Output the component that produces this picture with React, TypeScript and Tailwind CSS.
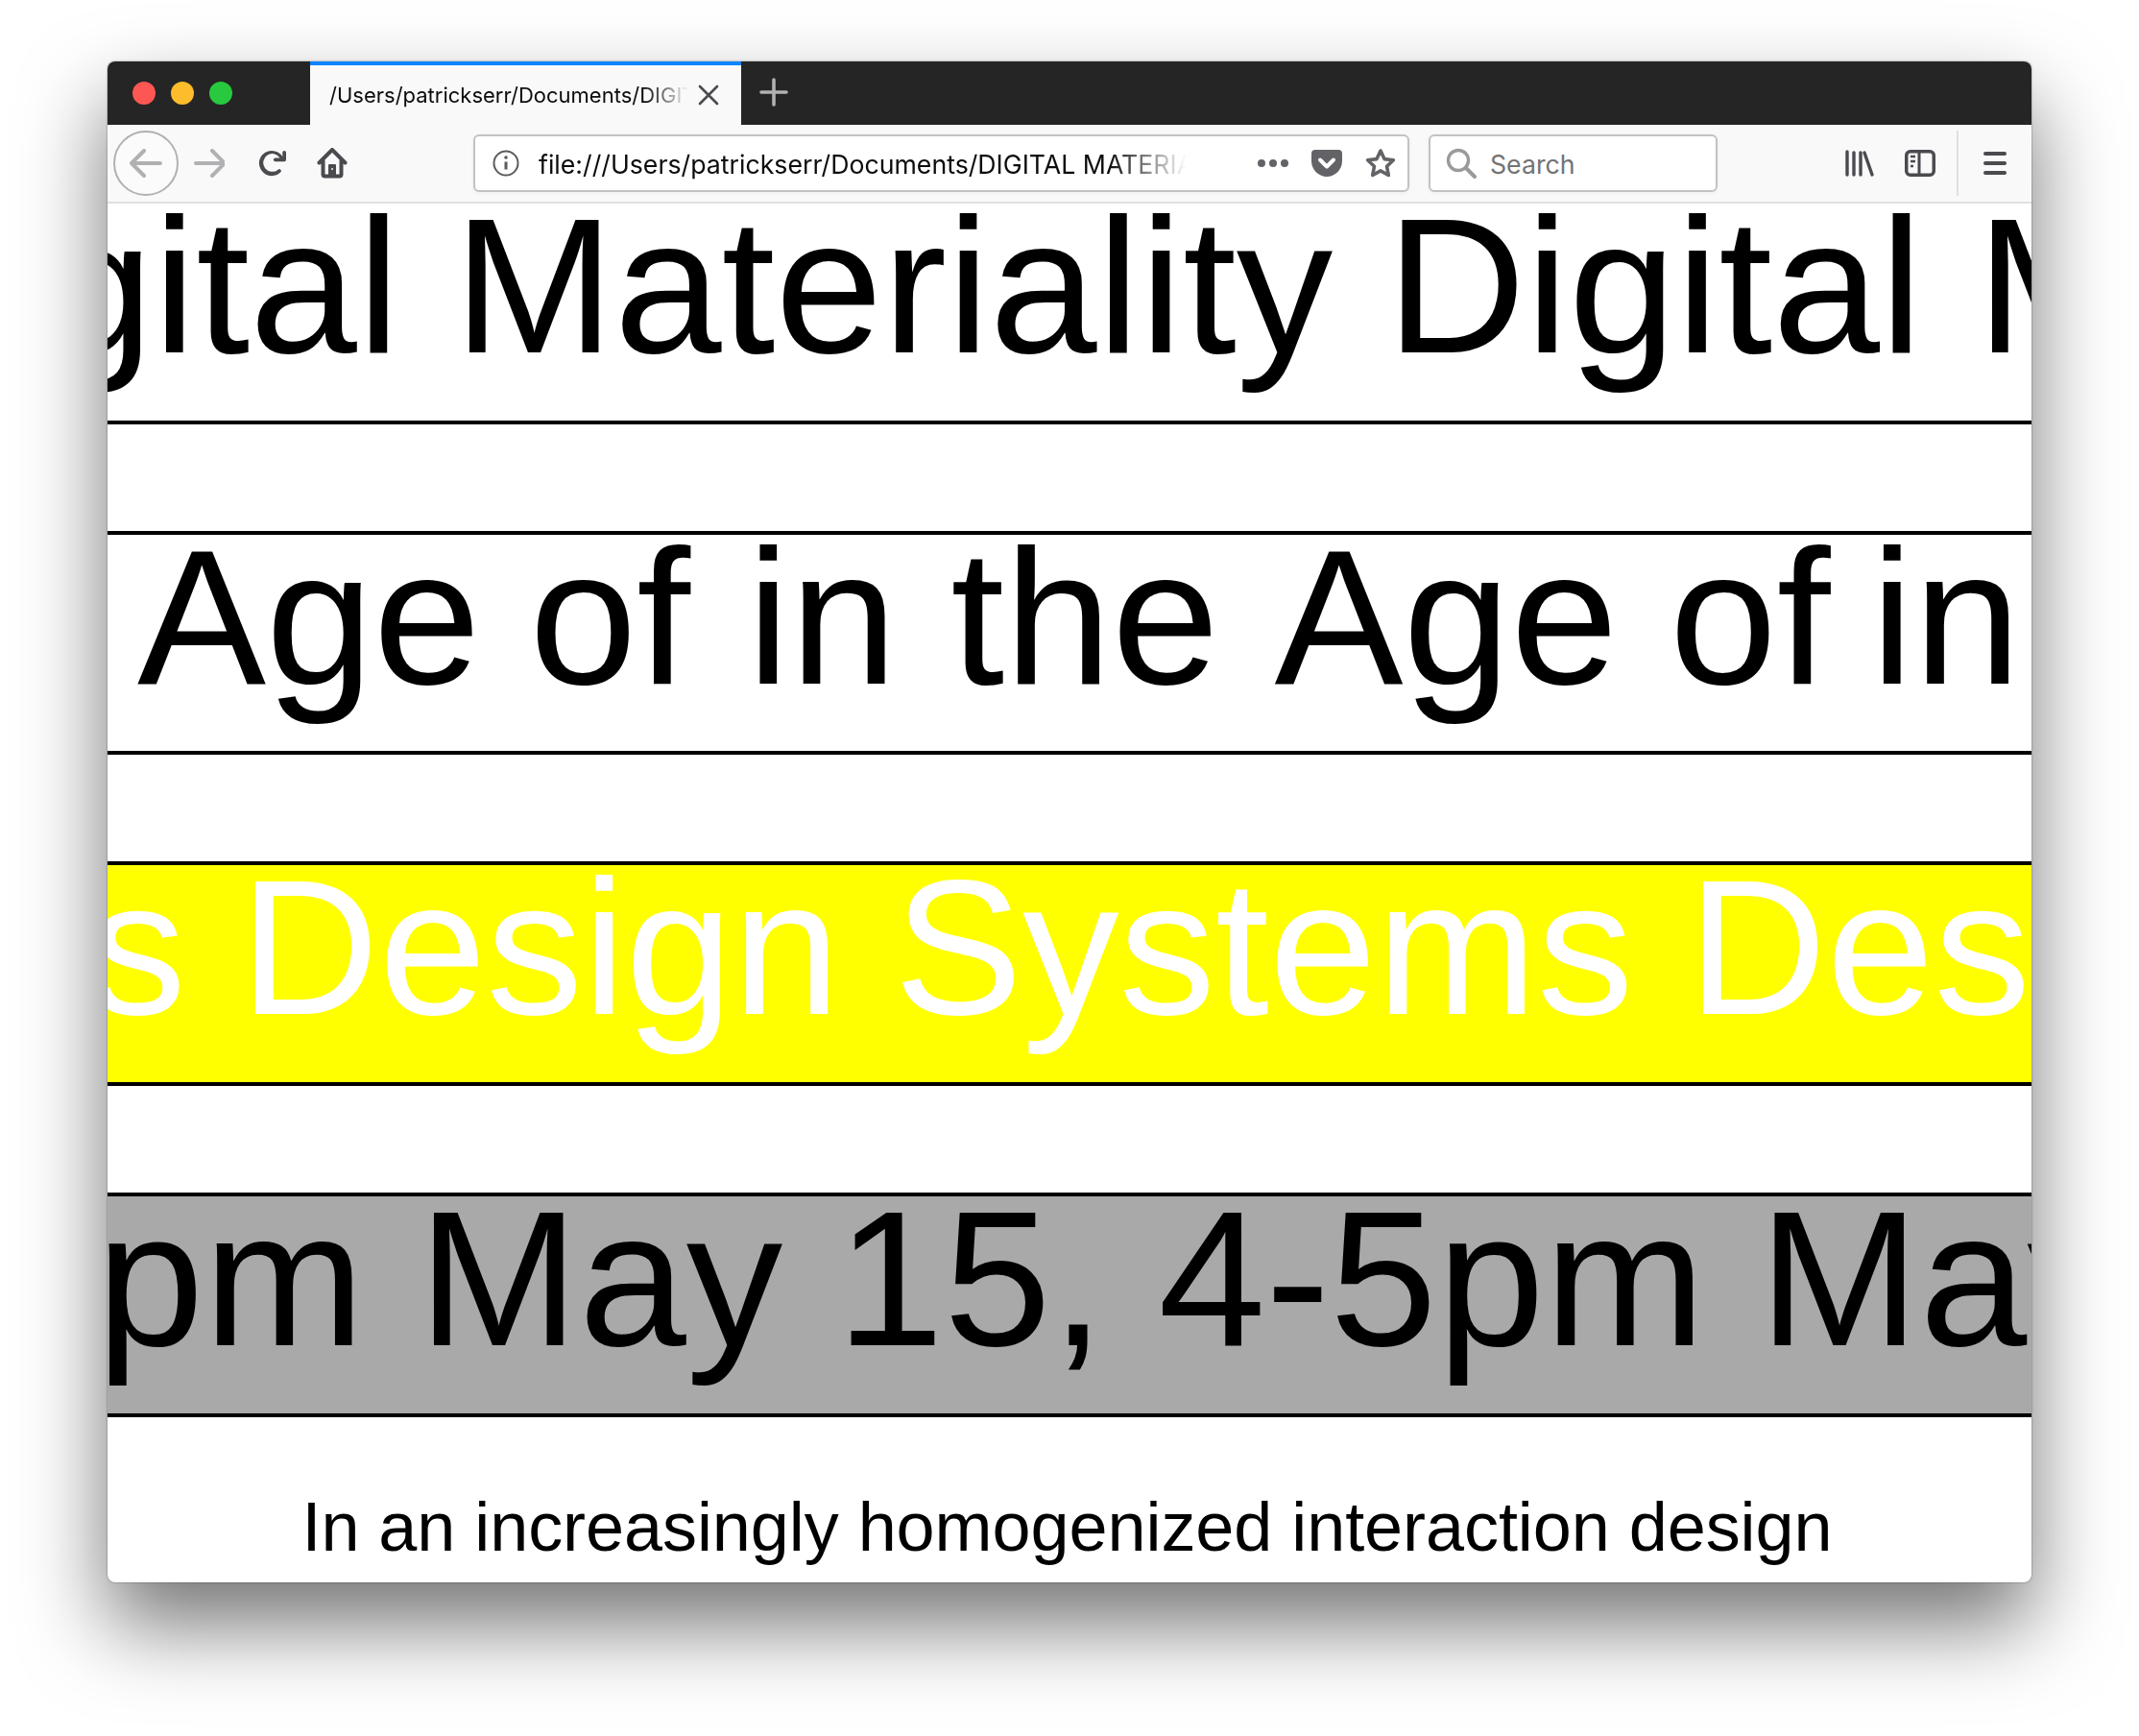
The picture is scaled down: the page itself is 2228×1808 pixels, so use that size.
import React from "react";

const ui = "font-['Inter','Noto_Sans',sans-serif]";

function Band({ children, offset, tone, height, top = true }: { children: React.ReactNode; offset: string; tone: string; height: string; top?: boolean }) {
  return (
    <div className={`${height} shrink-0 overflow-hidden border-black ${top ? "border-t-4" : ""} border-b-4 ${tone}`}>
      <div className={`whitespace-pre text-[201px] leading-[171px] font-['Liberation_Sans',Arial,sans-serif] [font-kerning:none] ${offset}`}>{children}</div>
    </div>
  );
}

function Back() {
  return (
    <div className="ml-[6px] flex h-[68px] w-[68px] shrink-0 items-center justify-center rounded-full border-2 border-[#b1b1b3] bg-[#fbfbfb]">
      <svg width="34" height="30" viewBox="0 0 34 30" fill="none" stroke="#b1b1b3" strokeWidth="4" strokeLinecap="round" strokeLinejoin="round">
        <path d="M2 15h30M15 2 2 15l13 13" />
      </svg>
    </div>
  );
}

export default function App() {
  return (
    <div className="h-[1808px] w-[2228px] overflow-hidden bg-white pl-[112px] pt-[64px]">
      <div className="flex h-[1584px] w-[2004px] flex-col overflow-hidden rounded-[8px] bg-white shadow-[0_44px_88px_rgba(0,0,0,0.55),0_0_2px_rgba(0,0,0,0.5)]">
        {/* Title bar */}
        <div className="flex h-[66px] shrink-0 bg-[#252525]">
          <div className="flex w-[211px] items-center gap-[16px] pl-[26px]">
            <span className="h-[24px] w-[24px] rounded-full bg-[#fc5753]" />
            <span className="h-[24px] w-[24px] rounded-full bg-[#fdbc2c]" />
            <span className="h-[24px] w-[24px] rounded-full bg-[#28c93f]" />
          </div>
          <div className={`flex w-[449px] items-center border-t-4 border-[#0a84ff] bg-[#f9f9fa] pl-[20px] ${ui}`}>
            <div className="w-[374px] overflow-hidden whitespace-nowrap text-[22px] text-[#0c0c0d] [mask-image:linear-gradient(to_right,black_88%,transparent)]">
              /Users/patrickserr/Documents/DIGITAL MATERIALITY
            </div>
            <svg className="ml-[10px]" width="22" height="22" viewBox="0 0 22 22" fill="none" stroke="#4a4a4f" strokeWidth="2.6" strokeLinecap="round">
              <path d="M2 2l18 18M20 2 2 20" />
            </svg>
          </div>
          <div className="flex items-center pb-[2px] pl-[19px]">
            <svg width="30" height="30" viewBox="0 0 30 30" fill="none" stroke="#b1b1b3" strokeWidth="3.6" strokeLinecap="round">
              <path d="M15 2v26M2 15h26" />
            </svg>
          </div>
        </div>

        {/* Toolbar */}
        <div className={`flex h-[82px] shrink-0 items-center border-b-2 border-[#e0e0e2] bg-[#f9f9fa] ${ui}`}>
          <Back />
          <svg className="ml-[16px]" width="32" height="30" viewBox="0 0 32 30" fill="none" stroke="#b1b1b3" strokeWidth="4" strokeLinecap="round" strokeLinejoin="round">
            <path d="M2 15h28M19 2l13 13-13 13" />
          </svg>
          <svg className="ml-[34px]" width="30" height="30" viewBox="0 0 16 16" fill="#4a4a4f">
            <path d="M15 1a1 1 0 0 0-1 1v2.418A6.995 6.995 0 1 0 8 15a6.954 6.954 0 0 0 4.95-2.05 1 1 0 0 0-1.414-1.414A5.019 5.019 0 1 1 12.549 5H10a1 1 0 0 0 0 2h5a1 1 0 0 0 1-1V2a1 1 0 0 0-1-1z" />
          </svg>
          <svg className="ml-[32px]" width="32" height="32" viewBox="0 0 32 32">
            <path d="M2.5 15.5 16 2l13.5 13.5M6.5 13v14.5a2 2 0 0 0 2 2h15a2 2 0 0 0 2-2V13" fill="none" stroke="#4a4a4f" strokeWidth="4" strokeLinejoin="round" strokeLinecap="round" />
            <rect x="12" y="17" width="8" height="12" rx="1" fill="#4a4a4f" />
            <rect x="15" y="21" width="2" height="2" fill="#c9c9cb" />
          </svg>

          {/* URL bar */}
          <div className="ml-[131px] flex h-[60px] w-[975px] shrink-0 items-center rounded-[6px] border-2 border-[#c2c2c4] bg-white pl-[18px] shadow-[0_1px_4px_rgba(0,0,0,0.05)]">
            <svg width="28" height="28" viewBox="0 0 28 28" fill="none" stroke="#5b5b5f" strokeWidth="2">
              <circle cx="14" cy="14" r="12.5" />
              <path d="M14 12.5v8" strokeWidth="3" />
              <circle cx="14" cy="8" r="1.8" fill="#5b5b5f" stroke="none" />
            </svg>
            <div className="ml-[20px] w-[675px] overflow-hidden whitespace-nowrap pt-[3px] text-[26.7px] text-[#0c0c0d] [mask-image:linear-gradient(to_right,black_88%,transparent)]">
              file:///Users/patrickserr/Documents/DIGITAL MATERIALITY
            </div>
            <svg className="ml-[74px]" width="32" height="8" viewBox="0 0 32 8" fill="#636367">
              <circle cx="4" cy="4" r="4" />
              <circle cx="16" cy="4" r="4" />
              <circle cx="28" cy="4" r="4" />
            </svg>
            <svg className="ml-[24px]" width="32" height="28" viewBox="0 0 32 28">
              <path d="M4 0h24a4 4 0 0 1 4 4v8C32 21 24 28 16 28S0 21 0 12V4a4 4 0 0 1 4-4z" fill="#636367" />
              <path d="M9 10.5l7 7 7-7" fill="none" stroke="#fff" strokeWidth="4" strokeLinecap="round" strokeLinejoin="round" />
            </svg>
            <svg className="ml-[24px]" width="32" height="32" viewBox="0 0 32 32" fill="none" stroke="#636367" strokeWidth="3.6" strokeLinejoin="round">
              <path d="M16 3l4 8.6 9.4 1.2-6.9 6.4 1.8 9.3L16 23.9l-8.3 4.6 1.8-9.3-6.9-6.4 9.4-1.2z" />
            </svg>
          </div>

          {/* Search */}
          <div className="ml-[20px] flex h-[60px] w-[301px] shrink-0 items-center rounded-[6px] border-2 border-[#c2c2c4] bg-white pl-[16px] shadow-[0_1px_4px_rgba(0,0,0,0.05)]">
            <svg width="32" height="32" viewBox="0 0 32 32" fill="none" stroke="#9a9a9a" strokeWidth="3.4" strokeLinecap="round">
              <circle cx="13" cy="13" r="10.5" />
              <path d="M21 21l9 9" strokeWidth="4" />
            </svg>
            <span className="ml-[14px] pt-[3px] text-[26.7px] text-[#737373]">Search</span>
          </div>

          <svg className="ml-[133px]" width="30" height="28" viewBox="0 0 30 28" fill="none" stroke="#4a4a4f" strokeWidth="3.4" strokeLinecap="round">
            <path d="M2 2v24M9 3v23M16 3v23M20 3l8 23" />
          </svg>
          <svg className="ml-[32px]" width="32" height="28" viewBox="0 0 32 28" fill="none" stroke="#4a4a4f">
            <rect x="1.75" y="1.75" width="28.5" height="24.5" rx="4" strokeWidth="3.5" />
            <path d="M15 2v24" strokeWidth="3" />
            <path d="M6 7h5M6 12h5M6 17h3" strokeWidth="2.4" />
          </svg>
          <div className="ml-[22px] h-[68px] w-[2px] bg-[#e0e0e2]" />
          <div className="ml-[26px] flex w-[24px] flex-col gap-[6px]">
            <span className="h-[4px] rounded-full bg-[#4a4a4f]" />
            <span className="h-[4px] rounded-full bg-[#4a4a4f]" />
            <span className="h-[4px] rounded-full bg-[#4a4a4f]" />
          </div>
        </div>

        {/* Content */}
        <div className="flex flex-col gap-[111px]">
          <Band top={false} height="h-[230px]" tone="text-black" offset="ml-[-254px]">Digital Materiality Digital Materiality </Band>
          <Band height="h-[233px]" tone="text-black" offset="ml-[31px]">
            Age <span className="ml-[-5px]">of</span> <span className="ml-[3px]">in</span> the <span className="ml-[2px]">Age</span> <span className="ml-[-2px]">of</span><span className="ml-[-14px]"> in</span>
          </Band>
          <Band height="h-[234px]" tone="bg-[#ffff00] text-white" offset="ml-[-689px]">Systems Design Systems Design Systems </Band>
          <Band height="h-[234px]" tone="bg-[#a9a9a9] text-black" offset="ml-[-302px]">4-5pm May 15, 4-5pm May 15, 4-5pm </Band>
        </div>
        <p className="mt-[78px] pr-[5px] text-center text-[72px] leading-[72px] tracking-[-0.06px] text-black font-['Liberation_Sans',Arial,sans-serif]">
          In an increasingly homogenized interaction design
        </p>
      </div>
    </div>
  );
}
